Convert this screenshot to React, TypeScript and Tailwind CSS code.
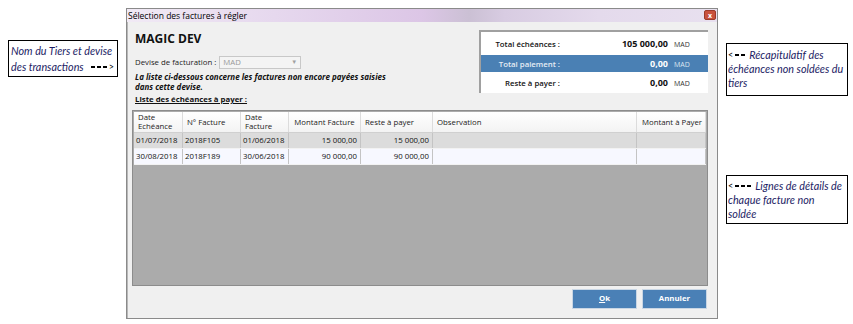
import React from "react";

const ui = { fontFamily: '"Open Sans", "Noto Sans", sans-serif' };
const note = { fontFamily: 'Lato, "Open Sans", sans-serif' };

function Dash({ n }: { n: number }) {
  return (
    <span className="inline-flex items-center gap-[2px] align-middle mx-[2px]">
      {Array.from({ length: n }).map((_, i) => (
        <span key={i} className="inline-block w-[4px] h-[2px] bg-black" />
      ))}
    </span>
  );
}

const cols = ["w-[49px]", "w-[58px]", "w-[48px]", "w-[72px]", "w-[72px]", "w-[204px]", "w-[69px]"];

type Row = [string, string, string, string, string, string, string];
const rows: Row[] = [
  ["01/07/2018", "2018F105", "01/06/2018", "15 000,00", "15 000,00", "", ""],
  ["30/08/2018", "2018F189", "30/06/2018", "90 000,00", "90 000,00", "", ""],
];

function SumRow({ label, value, h, blue }: { label: string; value: string; h: string; blue?: boolean }) {
  return (
    <div className={`${h} flex items-center ${blue ? "bg-[#4a80b4]" : ""}`}>
      <div className="flex items-baseline leading-none">
        <span className={`w-[79px] text-right font-semibold text-[7.8px] ${blue ? "text-[#e6edf5]" : "text-[#111]"}`}>{label}</span>
        <span className={`w-[108px] text-right font-bold text-[9px] ${blue ? "text-white" : "text-[#111]"}`}>{value}</span>
        <span className={`ml-[6px] text-[7px] ${blue ? "text-[#dde6f0]" : "text-[#333]"}`}>MAD</span>
      </div>
    </div>
  );
}

export default function App() {
  return (
    <div className="w-[853px] h-[324px] bg-white flex overflow-hidden" style={ui}>
      {/* left annotation */}
      <div className="w-[126px] shrink-0 pl-[8px] pt-[40px]">
        <div
          className="w-[110px] h-[37px] border border-black px-[2px] pt-[2px] text-[10.8px] leading-[16px] italic text-[#1c1c64] whitespace-nowrap"
          style={note}
        >
          <div>Nom du Tiers et devise</div>
          <div className="flex items-center">
            des transactions <span className="ml-[5px] inline-flex items-center"><Dash n={3} /><span className="text-black not-italic text-[9px]">&gt;</span></span>
          </div>
        </div>
      </div>

      {/* window */}
      <div className="w-[592px] shrink-0 mt-[8px] h-[311px] border border-[#8a8a8a] bg-[#f0f0f0] flex flex-col">
        <div className="h-[13px] relative bg-[linear-gradient(to_right,#f1eaf5_0%,#e6d8ee_25%,#dcc6e6_50%,#cbc0d4_58%,#d8cce2_64%,#e4daec_80%,#e8e0ef_100%)] flex items-center pl-[1px]">
          <span className="text-[8.5px] leading-[13px] text-black">Sélection des factures à régler</span>
          <div className="absolute right-[1px] top-[1px] w-[12px] h-[10px] rounded-[2px] bg-[#c9523d] border border-[#9a3a2a] flex items-center justify-center text-white text-[7px] font-bold leading-none">
            x
          </div>
        </div>
        <div className="flex-1 border-l border-[#b8b8b8] flex flex-col">
          {/* top section */}
          <div className="flex justify-between pt-[8px] pl-[7px] pr-[9px] h-[82px]">
            <div className="flex flex-col">
              <div className="mt-[2px] text-[12px] leading-[14px] font-bold text-[#111]">MAGIC DEV</div>
              <div className="mt-[10px] flex items-center h-[13px]">
                <span className="text-[7.8px] text-[#222]">Devise de facturation :</span>
                <div className="ml-[3px] w-[82px] h-[13px] border border-[#c8c8c8] bg-[#f4f4f4] flex items-center justify-between px-[3px]">
                  <span className="text-[7.8px] text-[#9a9a9a]">MAD</span>
                  <span className="text-[6px] text-[#a0a0a0]">▼</span>
                </div>
              </div>
              <div className="mt-[3px] text-[8px] leading-[10px] italic font-bold text-[#111] w-[300px]">
                La liste ci-dessous concerne les factures non encore payées saisies
                <br />
                dans cette devise.
              </div>
              <div className="mt-[2px] text-[7.8px] leading-[10px] font-bold underline text-[#111]">
                Liste des échéances à payer :
              </div>
            </div>
            <div className="w-[229px] h-[63px] bg-white border-l-2 border-t-2 border-[#a0a0a0] flex flex-col">
              <SumRow label="Total échéances :" value="105 000,00" h="h-[23px]" />
              <SumRow label="Total paiement :" value="0,00" h="h-[17px]" blue />
              <SumRow label="Reste à payer :" value="0,00" h="h-[21px]" />
            </div>
          </div>

          {/* table */}
          <div className="ml-[4px] mt-[6px] w-[576px] h-[176px] border border-[#8c8c8c] p-[1px] bg-[#ababab] flex flex-col">
            <div className="flex h-[21px] bg-[linear-gradient(to_bottom,#ffffff,#f3f3f3)] border-b border-[#d0d0d0] text-[7.8px] text-[#222] leading-[9px]">
              {[
                ["Date", "Echéance"],
                ["N° Facture"],
                ["Date", "Facture"],
                ["Montant Facture"],
                ["Reste à payer"],
                ["Observation"],
                ["Montant à Payer"],
              ].map((h, i) => (
                <div
                  key={i}
                  className={`${cols[i]} shrink-0 border-r border-[#dcdcdc] flex flex-col justify-center ${i === 6 ? "items-end pr-[3px]" : i === 3 ? "items-center" : "pl-[4px]"}`}
                >
                  {h.map((t, j) => (
                    <span key={j}>{t}</span>
                  ))}
                </div>
              ))}
            </div>
            {rows.map((r, ri) => (
              <div
                key={ri}
                className={`flex h-[16px] border-b border-[#f2f2f2] text-[7.8px] text-[#111] ${ri === 0 ? "bg-[#dcdcdc]" : "bg-[#f7f8ff]"}`}
              >
                {r.map((c, i) => (
                  <div
                    key={i}
                    className={`${cols[i]} shrink-0 border-r border-[#c4c4c4] flex items-center ${i === 3 || i === 4 ? "justify-end pr-[3px]" : "pl-[2px]"}`}
                  >
                    {c}
                  </div>
                ))}
              </div>
            ))}
          </div>

          {/* buttons */}
          <div className="mt-[3px] flex justify-end gap-[5px] pr-[10px]">
            <div className="w-[65px] h-[20px] bg-[#4a80b6] border border-[#c9d6e4] flex items-center justify-center text-white font-bold text-[7.8px]">
              <span className="underline">O</span>k
            </div>
            <div className="w-[65px] h-[20px] bg-[#4a80b6] border border-[#c9d6e4] flex items-center justify-center text-white font-bold text-[7.8px]">
              Annuler
            </div>
          </div>
        </div>
      </div>

      {/* right annotations */}
      <div className="pl-[8px] flex flex-col">
        <div
          className="mt-[43px] w-[122px] h-[53px] border border-black px-[1px] pt-[4px] text-[10.8px] leading-[14px] italic text-[#1c1c64] whitespace-nowrap"
          style={note}
        >
          <div className="flex items-center">
            <span className="text-black not-italic text-[9px]">&lt;</span>
            <Dash n={2} />
            <span className="ml-[2px]">Récapitulatif des</span>
          </div>
          <div>échéances non soldées du</div>
          <div>tiers</div>
        </div>
        <div
          className="mt-[79px] w-[122px] h-[49px] border border-black px-[1px] pt-[3px] text-[10.8px] leading-[14px] italic text-[#1c1c64] whitespace-nowrap"
          style={note}
        >
          <div className="flex items-center">
            <span className="text-black not-italic text-[9px]">&lt;</span>
            <Dash n={3} />
            <span className="ml-[2px]">Lignes de détails de</span>
          </div>
          <div>chaque facture non</div>
          <div>soldée</div>
        </div>
      </div>
    </div>
  );
}
